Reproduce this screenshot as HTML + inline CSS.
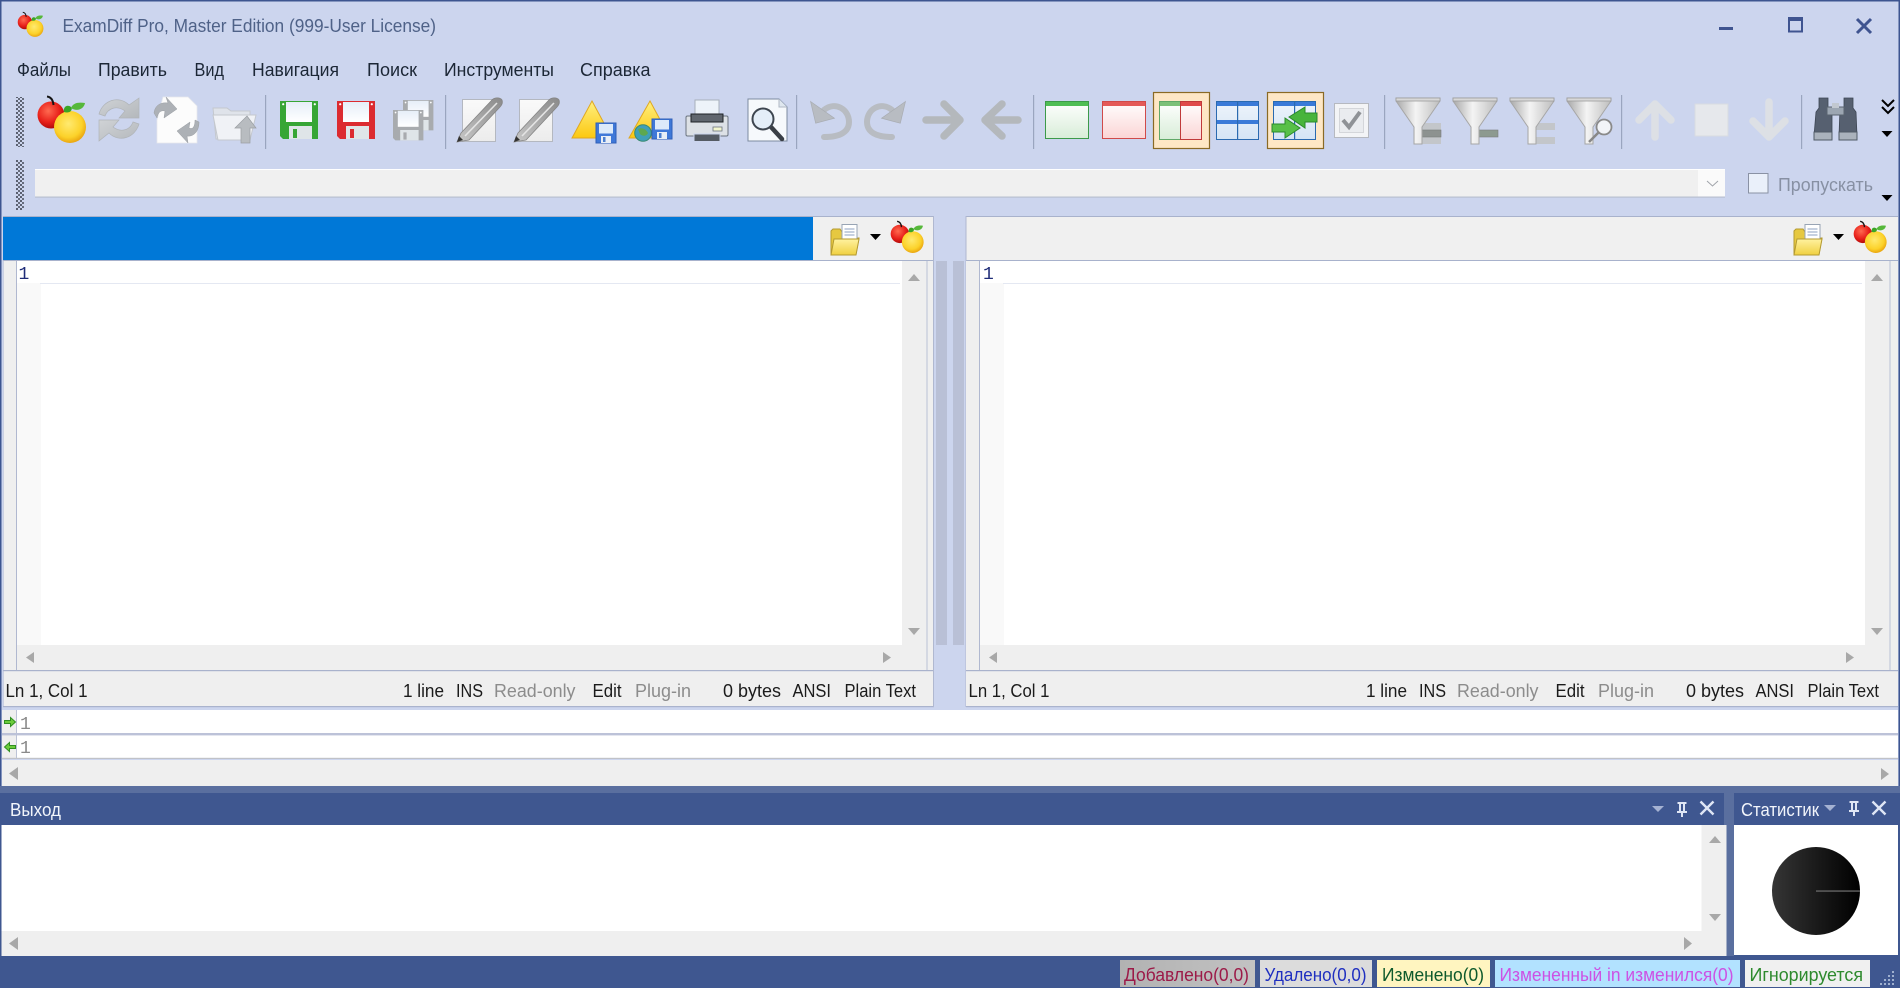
<!DOCTYPE html>
<html lang="ru"><head><meta charset="utf-8"><title>ExamDiff Pro</title>
<style>
html,body{margin:0;padding:0;width:1900px;height:988px;overflow:hidden;background:#ccd5ee}
svg{display:block}
text{font-family:"Liberation Sans","DejaVu Sans",sans-serif}
.m{font-size:18px;fill:#1c2736}
.s{font-size:18px;fill:#1b1b1b}
.g{font-size:18px;fill:#8c8c8c}
.n{font-family:"Liberation Mono","DejaVu Sans Mono",monospace;font-size:18px}
.b{font-size:18px}
</style></head><body>
<svg width="1900" height="988" viewBox="0 0 1900 988" xmlns="http://www.w3.org/2000/svg">
<defs>
<pattern id="grip" width="4" height="4" patternUnits="userSpaceOnUse"><rect width="2" height="2" fill="#5a6070"/><rect x="2" y="2" width="2" height="2" fill="#666c7c"/></pattern>
<radialGradient id="red" cx=".4" cy=".35" r=".7"><stop offset="0" stop-color="#ff6a50"/><stop offset=".6" stop-color="#e8201a"/><stop offset="1" stop-color="#a80808"/></radialGradient>
<radialGradient id="yel" cx=".45" cy=".4" r=".65"><stop offset="0" stop-color="#ffea70"/><stop offset=".65" stop-color="#fcd22a"/><stop offset="1" stop-color="#e59a08"/></radialGradient>
<linearGradient id="fun" x1="0" x2="1" y1="0" y2="0"><stop offset="0" stop-color="#a8a8a8"/><stop offset=".45" stop-color="#f4f4f4"/><stop offset="1" stop-color="#bdbdbd"/></linearGradient>
<linearGradient id="lab" x1="0" x2="0" y1="0" y2="1"><stop offset="0" stop-color="#e6eef8"/><stop offset="1" stop-color="#ffffff"/></linearGradient>
<linearGradient id="wg" x1="0" x2="0" y1="0" y2="1"><stop offset="0" stop-color="#ffffff"/><stop offset="1" stop-color="#d8edd8"/></linearGradient>
<linearGradient id="wr" x1="0" x2="0" y1="0" y2="1"><stop offset="0" stop-color="#ffffff"/><stop offset="1" stop-color="#fbd5d5"/></linearGradient>
<linearGradient id="wb" x1="0" x2="0" y1="0" y2="1"><stop offset="0" stop-color="#eef4fb"/><stop offset="1" stop-color="#d4e4f5"/></linearGradient>
<linearGradient id="tri" x1="0" x2="0" y1="0" y2="1"><stop offset="0" stop-color="#fff080"/><stop offset="1" stop-color="#fcc810"/></linearGradient>
<linearGradient id="fold" x1="0" x2="0" y1="0" y2="1"><stop offset="0" stop-color="#fff2a0"/><stop offset="1" stop-color="#f0d040"/></linearGradient>
<linearGradient id="ball" x1="0" x2="1" y1="0" y2="0"><stop offset="0" stop-color="#353535"/><stop offset="1" stop-color="#000"/></linearGradient>
<linearGradient id="add" x1="0" x2="1" y1="0" y2="0"><stop offset="0" stop-color="#b2b2b2"/><stop offset="1" stop-color="#c2c2c2"/></linearGradient>
<linearGradient id="pen" x1="0" x2="1" y1="1" y2="0"><stop offset="0" stop-color="#c8c8c8"/><stop offset="1" stop-color="#8a8a8a"/></linearGradient>
<linearGradient id="doc" x1="0" x2="0" y1="0" y2="1"><stop offset="0" stop-color="#fafafa"/><stop offset="1" stop-color="#ececec"/></linearGradient>
<linearGradient id="greyb" x1="0" x2="1" y1="0" y2="1"><stop offset="0" stop-color="#d0d3d6"/><stop offset="1" stop-color="#b4b8bc"/></linearGradient>

<g id="apple">
<circle cx="13" cy="19" r="13.5" fill="url(#red)"/>
<path d="M9 0.5C13 1 15 4 15.5 9" fill="none" stroke="#151515" stroke-width="2"/>
<circle cx="32" cy="31" r="16" fill="url(#yel)"/>
<path d="M26 16C25 11 29 8 33 11C35 13 33 18 26 16Z" fill="#3aa526"/>
<path d="M33 12C35 7 40 6 47 7C46 13 39 16 33 12Z" fill="#56b83a"/>
</g>
<g id="floppy">
<path d="M0 0H38V38H3L0 35Z" fill="currentColor"/>
<rect x="6" y="1" width="26" height="20" fill="url(#lab)"/>
<rect x="9" y="25" width="23" height="13" fill="#dfe5e8"/>
<rect x="13" y="28" width="4" height="9" fill="currentColor"/>
<circle cx="3.2" cy="3.2" r="1.1" fill="#fff"/><circle cx="34.8" cy="3.2" r="1.1" fill="#fff"/>
</g>
<g id="bfloppy">
<rect x="0" y="0" width="20" height="20" fill="#3f78d8" stroke="#2f5fb8"/>
<rect x="3" y="1" width="14" height="9.5" fill="#dceafa"/>
<rect x="5" y="13" width="10" height="7" fill="#e8eef6"/>
<rect x="7" y="14" width="2.5" height="5" fill="#4b7fd0"/>
</g>
<g id="pencil">
<rect x="5.5" y="1.5" width="33" height="42" fill="url(#doc)" stroke="#b4b8c0"/>
<path d="M4 35L34 3C37 -1 43 -1 45 2C46 5 45 7 43 9L12 42L0 44Z" fill="url(#pen)" stroke="#858585" stroke-width=".8"/>
<path d="M8 38L40 5" stroke="#e4e4e4" stroke-width="1.6"/>
<path d="M0 44L2 38L6 42Z" fill="#333"/>
</g>
<g id="funnel">
<path d="M0 0H44V3L26 29V46H18V29L0 3Z" fill="url(#fun)" stroke="#a6a6a6" stroke-width="1"/>
<rect x="0" y="0" width="44" height="3" fill="#d8d8d8" stroke="#9c9c9c" stroke-width=".8"/>
</g>
<g id="folder">
<path d="M1 10V30H26L29 14H25V8H12L10 5H3L1 7Z" fill="#e6c840" stroke="#b49a30"/>
<rect x="12" y="0.5" width="15" height="17" fill="#fff" stroke="#98a4b4"/>
<path d="M14.5 5H24.5M14.5 8H24.5M14.5 11H24.5" stroke="#8ea2c0" stroke-width="1"/>
<path d="M1 31L4 15H29L26 31Z" fill="url(#fold)" stroke="#b49a30"/>
</g>
<path id="caret" d="M0 0H11L5.5 6Z" fill="#000"/>
<path id="pin" d="M-4.5 -7H4.5V-5H3V2H5V4H1V8H-1V4H-5V2H-3V-5H-4.5ZM-1 -5V2H1V-5Z" fill="#dfe6f5"/>
<path id="x" d="M-6.5 -6.5L6.5 6.5M6.5 -6.5L-6.5 6.5" stroke="#dfe6f5" stroke-width="2.4" fill="none"/>
<path id="ggreen" d="M0 3H6V0L11 4.5L6 9V6H0Z" fill="#6ccc3c" stroke="#2f8f20" stroke-width="1"/>
</defs>

<!-- base -->
<rect width="1900" height="988" fill="#ccd5ee"/>
<rect width="1900" height="1.5" fill="#3d5590"/>
<rect width="1.5" height="988" fill="#3d5590"/>
<rect x="1898.5" width="1.5" height="988" fill="#3d5590"/>

<!-- title bar -->
<use href="#apple" transform="translate(18,12) scale(.53)"/>
<text x="62.5" y="32" font-size="18" fill="#4f6288" textLength="373.5" lengthAdjust="spacingAndGlyphs">ExamDiff Pro, Master Edition (999-User License)</text>
<rect x="1719" y="27" width="14" height="3" fill="#3f5490"/>
<path d="M1789 18.5H1802V31.5H1789Z" fill="none" stroke="#3f5490" stroke-width="2"/><rect x="1788" y="17" width="15" height="4" fill="#3f5490"/>
<path d="M1857 19L1871 33M1871 19L1857 33" stroke="#3f5490" stroke-width="3"/>

<!-- menu -->
<text class="m" x="17" y="76" textLength="54" lengthAdjust="spacingAndGlyphs">Файлы</text>
<text class="m" x="98" y="76" textLength="69" lengthAdjust="spacingAndGlyphs">Править</text>
<text class="m" x="194.5" y="76" textLength="29.5" lengthAdjust="spacingAndGlyphs">Вид</text>
<text class="m" x="252" y="76" textLength="87" lengthAdjust="spacingAndGlyphs">Навигация</text>
<text class="m" x="367" y="76" textLength="50" lengthAdjust="spacingAndGlyphs">Поиск</text>
<text class="m" x="444" y="76" textLength="110" lengthAdjust="spacingAndGlyphs">Инструменты</text>
<text class="m" x="580" y="76" textLength="70.5" lengthAdjust="spacingAndGlyphs">Справка</text>

<!-- grippers -->
<rect x="16" y="97" width="8" height="50" fill="url(#grip)"/>
<rect x="16" y="160" width="8" height="50" fill="url(#grip)"/>

<!-- separators -->
<g fill="#9aa5bf"><rect x="265" y="95" width="1.2" height="54"/><rect x="445" y="95" width="1.2" height="54"/><rect x="796" y="95" width="1.2" height="54"/><rect x="1033" y="95" width="1.2" height="54"/><rect x="1384" y="95" width="1.2" height="54"/><rect x="1621" y="95" width="1.2" height="54"/><rect x="1801" y="95" width="1.2" height="54"/></g>

<!-- toolbar -->
<use href="#apple" transform="translate(38,96)"/>
<g fill="url(#greyb)" stroke="#b0b4b8" stroke-width=".7">
<path d="M99 114C103 100 119 95 129 105L139 98V118H119L125 111C117 105 108 108 105 116Z"/>
<path d="M139 124C135 138 119 143 109 133L99 141V120H119L113 127C121 133 130 130 133 122Z"/>
</g>
<path d="M163 97H188L197 106V143H157V120Z" fill="#fcfcfc" stroke="#e6e8ec" stroke-width=".8"/>
<g fill="#adb1b6" stroke="#9a9ea3" stroke-width=".5">
<path d="M154 113C155 105 161 102 168 103L166 97L177 109L164 118L165 111C161 110 158 112 157 118Z"/>
<path d="M199 122C199 132 193 137 187 136L188 143L177 131L190 122L189 128C193 130 195 126 195 120Z"/>
</g>
<path d="M213 108H227L231 111H250V139H216Z" fill="#dfe3ea" stroke="#c4c8ce"/>
<path d="M213 115H256L250 140H218Z" fill="#f0f2f6" stroke="#c4c8ce"/>
<path d="M247 116L256 128H250V143H241V128H235Z" fill="#b8bcc0" stroke="#9a9ea2" stroke-width=".7"/>

<use href="#floppy" x="280" y="101" style="color:#37a635"/>
<use href="#floppy" x="337" y="101" style="color:#dc2b30"/>
<use href="#floppy" transform="translate(403,100) scale(.8)" style="color:#a8abae"/>
<use href="#floppy" transform="translate(393,110) scale(.8)" style="color:#a8abae"/>

<use href="#pencil" x="457" y="98"/>
<use href="#pencil" x="514" y="98"/>

<path d="M592 101L612 138H572Z" fill="url(#tri)" stroke="#e0a820"/>
<use href="#bfloppy" x="596" y="123"/>
<path d="M650 101L670 138H629Z" fill="url(#tri)" stroke="#e0a820"/>
<circle cx="643" cy="133" r="8.3" fill="#3f9fb8" stroke="#3a8a70"/><path d="M638 129C642 127 646 129 648 133C646 137 642 136 640 134Z" fill="#5da850"/>
<use href="#bfloppy" x="652" y="119"/>

<rect x="695" y="100" width="24" height="17" fill="#edf3f9" stroke="#a8b0bb"/>
<rect x="686" y="116" width="42" height="20" rx="1.5" fill="#dde1e6" stroke="#6b7480"/>
<rect x="691" y="114" width="32" height="8" fill="#60666e" stroke="#1e2226"/>
<rect x="713" y="127" width="9" height="4" fill="#f2f5ce" stroke="#6b7480" stroke-width=".8"/>
<rect x="694" y="134" width="26" height="7.5" fill="#555b63" stroke="#ccd5ee"/>

<path d="M748 99H779L787 107V141H748Z" fill="#f6f9fc" stroke="#7d8aa0"/>
<path d="M779 99V107H787" fill="#dfe7ef" stroke="#b0b8c4"/>
<path d="M771 127L782 139" stroke="#3a3f46" stroke-width="4.5" stroke-linecap="round"/>
<circle cx="763" cy="119" r="10.5" fill="#e4eef8" stroke="#3e4650" stroke-width="2"/>

<g fill="none" stroke="#b8bcc2" stroke-width="6" stroke-linecap="round">
<path d="M824 110C835 101 849 109 849 122C849 132 840 137 824 137"/>
<path d="M892 110C881 101 867 109 867 122C867 132 876 137 892 137"/>
</g>
<path d="M811 101L834 119 L815 123Z" fill="#b8bcc2" stroke="#a8acb2" stroke-width=".7" transform="rotate(-3 820 110)"/>
<path d="M905 101L882 119L901 123Z" fill="#b8bcc2" stroke="#a8acb2" stroke-width=".7" transform="rotate(3 896 110)"/>

<g fill="none" stroke="#b4b8bc" stroke-width="7.5" stroke-linecap="round" stroke-linejoin="round">
<path d="M926 120H960M944 104L960 120L944 136"/>
<path d="M1018 120H985M1002 104L985 120L1002 136"/>
</g>

<!-- window icons -->
<rect x="1045.5" y="101.5" width="43" height="37" fill="url(#wg)" stroke="#3c9a4a"/><rect x="1046" y="102" width="42" height="4" fill="#4fbe54"/>
<rect x="1102.5" y="101.5" width="43" height="37" fill="url(#wr)" stroke="#d04a4a"/><rect x="1103" y="102" width="42" height="4" fill="#e45a58"/>

<rect x="1153.5" y="92.5" width="56" height="56" fill="#fee7c5" stroke="#8a6a25" stroke-width="1.2"/>
<rect x="1159.5" y="101.5" width="21" height="38" fill="url(#wg)" stroke="#60a868"/><rect x="1160" y="102" width="20" height="4" fill="#7cc078"/>
<rect x="1180.5" y="101.5" width="21" height="38" fill="url(#wr)" stroke="#c03a3a"/><rect x="1181" y="102" width="20" height="4" fill="#e04a4a"/>

<rect x="1216.5" y="101.5" width="42" height="38" fill="url(#wb)" stroke="#2a6ab0"/><rect x="1217" y="102" width="41" height="4" fill="#3a7ad8"/><rect x="1217" y="120" width="41" height="4" fill="#3a7ad8"/><rect x="1237" y="102" width="1.2" height="37" fill="#2a6ab0"/>

<rect x="1267.5" y="92.5" width="56" height="56" fill="#fee7c5" stroke="#8a6a25" stroke-width="1.2"/>
<rect x="1273.5" y="101.5" width="42" height="38" fill="url(#wb)" stroke="#2a6ab0"/><rect x="1274" y="102" width="41" height="4" fill="#3a7ad8"/><rect x="1294" y="102" width="1.2" height="37" fill="#2a6ab0"/>
<path d="M1317 113V122H1305V128L1289 117L1305 107V113Z" fill="#48b43c" stroke="#2a8a2a"/>
<path d="M1272 124V132H1285V138L1300 128L1285 118V124Z" fill="#58c048" stroke="#2a8a2a"/>

<rect x="1334.5" y="103.5" width="34" height="34" fill="#f3f4f6" stroke="#b6b9c0"/><rect x="1339.5" y="108.5" width="24" height="24" fill="#eaecef" stroke="#d4d6da"/>
<path d="M1343 120L1349 127L1360 112" fill="none" stroke="#8f9296" stroke-width="4"/>

<!-- funnels -->
<rect x="1420" y="123" width="21" height="21" fill="#c3c6ca"/><rect x="1420" y="130" width="21" height="7" fill="#8d9290" stroke="#7a7e7c" stroke-width=".6"/>
<use href="#funnel" x="1396" y="98"/>
<rect x="1477" y="130" width="21" height="7" fill="#8d9a90" stroke="#7a7e7c" stroke-width=".6"/>
<use href="#funnel" x="1453" y="98"/>
<rect x="1535" y="123" width="20" height="7" fill="#c3c6ca"/><rect x="1535" y="137" width="20" height="7" fill="#c3c6ca"/>
<use href="#funnel" x="1510" y="98"/>
<use href="#funnel" x="1567" y="98"/>
<path d="M1589 142L1600 131" stroke="#888" stroke-width="2.5"/>
<circle cx="1604" cy="127" r="7.5" fill="#f2f4f8" stroke="#8a8a8a" stroke-width="1.8"/>

<!-- nav arrows -->
<g fill="none" stroke="#dde0e5" stroke-width="7.5" stroke-linecap="round" stroke-linejoin="round">
<path d="M1655 137V105M1639 120L1655 104L1671 120"/>
<path d="M1769 102V137M1753 121L1769 137L1785 121"/>
</g>
<rect x="1695" y="104" width="33" height="32" fill="#e6e8ec" stroke="#d8dbe1"/>

<!-- binoculars -->
<g fill="#566070" stroke="#3d4654" stroke-width=".8">
<path d="M1819 98H1828V108L1832 108V136H1814L1816 112L1819 108Z"/>
<path d="M1844 98H1853V108L1856 112L1857 136H1839L1840 108H1844Z"/>
</g>
<rect x="1827" y="107" width="17" height="8" fill="#9ca6b2" stroke="#5a6470"/><rect x="1832" y="103" width="7" height="5" fill="#c2c8d0"/>
<rect x="1814" y="132" width="18" height="8" fill="#aab2bc" stroke="#505a66"/><rect x="1839" y="132" width="18" height="8" fill="#aab2bc" stroke="#505a66"/>

<path d="M1882 100L1888 106L1894 100M1882 107L1888 113L1894 107" fill="none" stroke="#000" stroke-width="2"/>
<use href="#caret" transform="translate(1881.5,131)"/>
<use href="#caret" transform="translate(1881.5,195)"/>

<!-- search row -->
<rect x="35" y="169" width="1690" height="28" fill="#f0f0f0"/>
<rect x="1698" y="169" width="27" height="28" fill="#fafafa"/>
<rect x="35" y="169" width="1690" height="1" fill="#fff"/><rect x="35" y="196.5" width="1690" height="1.2" fill="#b8bfd0"/>
<path d="M1707 181L1712.5 186L1718 181" fill="none" stroke="#a0a4aa" stroke-width="1"/>
<rect x="1748.5" y="173.5" width="19.5" height="19.5" fill="#eaf0fa" stroke="#8a92a4"/>
<text x="1778" y="191" font-size="18" fill="#8790a3" textLength="95" lengthAdjust="spacingAndGlyphs">Пропускать</text>

<!-- left panel -->
<rect x="3" y="216" width="931" height="45" fill="#f0f0f0"/>
<rect x="3" y="217" width="810" height="43" fill="#0078d7"/>
<rect x="3" y="216" width="931" height="1" fill="#a8b2cc"/>
<rect x="3" y="260" width="931" height="1" fill="#a8b2cc"/>
<use href="#folder" x="830" y="224"/>
<use href="#caret" x="870" y="234"/>
<use href="#apple" transform="translate(891,221) scale(.68)"/>
<rect x="3" y="261" width="931" height="446" fill="#efefef"/>
<rect x="3" y="261" width="1" height="446" fill="#cbd1e2"/>
<rect x="16" y="261" width="1" height="409" fill="#b0b8d0"/>
<rect x="17" y="261" width="885" height="384" fill="#fff"/>
<rect x="17" y="283" width="24" height="362" fill="#f9f9f9"/>
<rect x="40" y="283" width="860" height="1" fill="#e4e8f2"/>
<rect x="926.5" y="261" width="1" height="410" fill="#b8c0d4"/>
<rect x="3" y="670" width="931" height="1.2" fill="#a9b2cc"/>
<rect x="3" y="706" width="931" height="1.2" fill="#aab3cd"/>
<rect x="933" y="216" width="1" height="491" fill="#b0b8d0"/>
<text class="n" x="18.5" y="279" fill="#1f2c78">1</text>
<path d="M908 281L914 274L920 281Z" fill="#a8a8a8"/>
<path d="M908 628L914 635L920 628Z" fill="#a8a8a8"/>
<path d="M34 652L26 657.5L34 663Z" fill="#a8a8a8"/>
<path d="M883 652L891 657.5L883 663Z" fill="#a8a8a8"/>

<text class="s" x="5.5" y="697" textLength="82" lengthAdjust="spacingAndGlyphs">Ln 1, Col 1</text>
<text class="s" x="403" y="697" textLength="41" lengthAdjust="spacingAndGlyphs">1 line</text>
<text class="s" x="456" y="697" textLength="27" lengthAdjust="spacingAndGlyphs">INS</text>
<text class="g" x="494" y="697" textLength="81.5" lengthAdjust="spacingAndGlyphs">Read-only</text>
<text class="s" x="592.5" y="697" textLength="29" lengthAdjust="spacingAndGlyphs">Edit</text>
<text class="g" x="635" y="697" textLength="56" lengthAdjust="spacingAndGlyphs">Plug-in</text>
<text class="s" x="723" y="697" textLength="58" lengthAdjust="spacingAndGlyphs">0 bytes</text>
<text class="s" x="792.5" y="697" textLength="38.5" lengthAdjust="spacingAndGlyphs">ANSI</text>
<text class="s" x="844.5" y="697" textLength="71.5" lengthAdjust="spacingAndGlyphs">Plain Text</text>

<!-- splitter -->
<rect x="936" y="261" width="11" height="384" fill="#b9c0d6"/>
<rect x="953" y="261" width="11" height="384" fill="#b9c0d6"/>

<!-- right panel -->
<rect x="966" y="216" width="932" height="45" fill="#f0f0f0"/>
<rect x="966" y="216" width="932" height="1" fill="#a8b2cc"/>
<rect x="966" y="260" width="932" height="1" fill="#a8b2cc"/>
<rect x="965.5" y="216" width="1" height="491" fill="#b0b8d0"/>
<use href="#folder" x="1793" y="224"/>
<use href="#caret" x="1833" y="234"/>
<use href="#apple" transform="translate(1854,221) scale(.68)"/>
<rect x="966" y="261" width="932" height="446" fill="#efefef"/>
<rect x="979" y="261" width="1" height="409" fill="#b0b8d0"/>
<rect x="980" y="261" width="885" height="384" fill="#fff"/>
<rect x="980" y="283" width="24" height="362" fill="#f9f9f9"/>
<rect x="1003" y="283" width="859" height="1" fill="#e4e8f2"/>
<rect x="1889.5" y="261" width="1" height="410" fill="#b8c0d4"/>
<rect x="966" y="670" width="932" height="1.2" fill="#a9b2cc"/>
<rect x="966" y="706" width="932" height="1.2" fill="#aab3cd"/>
<text class="n" x="983" y="279" fill="#1f2c78">1</text>
<path d="M1871 281L1877 274L1883 281Z" fill="#a8a8a8"/>
<path d="M1871 628L1877 635L1883 628Z" fill="#a8a8a8"/>
<path d="M997 652L989 657.5L997 663Z" fill="#a8a8a8"/>
<path d="M1846 652L1854 657.5L1846 663Z" fill="#a8a8a8"/>

<text class="s" x="968.5" y="697" textLength="81" lengthAdjust="spacingAndGlyphs">Ln 1, Col 1</text>
<text class="s" x="1366" y="697" textLength="41" lengthAdjust="spacingAndGlyphs">1 line</text>
<text class="s" x="1419" y="697" textLength="27" lengthAdjust="spacingAndGlyphs">INS</text>
<text class="g" x="1457" y="697" textLength="81.5" lengthAdjust="spacingAndGlyphs">Read-only</text>
<text class="s" x="1555.5" y="697" textLength="29" lengthAdjust="spacingAndGlyphs">Edit</text>
<text class="g" x="1598" y="697" textLength="56" lengthAdjust="spacingAndGlyphs">Plug-in</text>
<text class="s" x="1686" y="697" textLength="58" lengthAdjust="spacingAndGlyphs">0 bytes</text>
<text class="s" x="1755.5" y="697" textLength="38.5" lengthAdjust="spacingAndGlyphs">ANSI</text>
<text class="s" x="1807.5" y="697" textLength="71.5" lengthAdjust="spacingAndGlyphs">Plain Text</text>

<!-- compare lines -->
<rect x="2" y="710" width="1896" height="48" fill="#fff"/>
<rect x="2" y="710" width="14" height="48" fill="#efefef"/>
<rect x="16" y="710" width="1" height="48" fill="#bcc3d6"/>
<rect x="2" y="733" width="1896" height="2.4" fill="#bcc2d8"/>
<rect x="2" y="757.8" width="1896" height="1.2" fill="#c0c2c8"/>
<use href="#ggreen" x="4.5" y="717.5"/>
<use href="#ggreen" transform="translate(15.5,742.5) scale(-1,1)"/>
<text class="n" x="20" y="729" fill="#8a8a8a">1</text>
<text class="n" x="20" y="753" fill="#8a8a8a">1</text>
<rect x="2" y="760" width="1896" height="26" fill="#efefef"/>
<path d="M18 767L9 773.5L18 780Z" fill="#a8a8a8"/>
<path d="M1881 768L1889 774L1881 780Z" fill="#a8a8a8"/>

<!-- dock -->
<rect x="0" y="786" width="1900" height="202" fill="#3f5790"/>
<rect x="0" y="786" width="1900" height="7" fill="#5a6f9f"/>
<rect x="1724" y="786" width="10" height="170" fill="#5a6f9f"/>
<rect x="3" y="793" width="1721" height="32" fill="#3f5790"/>
<rect x="1734" y="793" width="164" height="32" fill="#3f5790"/>
<text x="10" y="816" font-size="18" fill="#f2f5fb" textLength="51" lengthAdjust="spacingAndGlyphs">Выход</text>
<path d="M1652 806H1664L1658 812Z" fill="#a5b2d2"/>
<use href="#pin" x="1682" y="809"/>
<use href="#x" x="1707" y="808"/>
<text x="1741" y="816" font-size="18" fill="#f2f5fb" textLength="78" lengthAdjust="spacingAndGlyphs">Статистик</text>
<path d="M1824 805H1836L1830 811Z" fill="#a5b2d2"/>
<use href="#pin" x="1854" y="808"/>
<use href="#x" x="1879" y="808"/>

<rect x="1.5" y="825" width="1725" height="131" fill="#efefef"/>
<rect x="1.5" y="825" width="1700" height="106" fill="#fff"/>
<path d="M1709 843L1715 836L1721 843Z" fill="#a8a8a8"/>
<path d="M1709 914L1715 921L1721 914Z" fill="#a8a8a8"/>
<path d="M18 937L9 943.5L18 950Z" fill="#a8a8a8"/>
<path d="M1684 937L1692 943.5L1684 950Z" fill="#a8a8a8"/>

<rect x="1734" y="825" width="164" height="130" fill="#fff"/>
<circle cx="1816" cy="891" r="44" fill="url(#ball)"/>
<rect x="1816" y="890.4" width="44" height="1.3" fill="#6a6a6a"/>

<!-- status -->
<rect x="1120" y="960" width="135" height="27" fill="url(#add)"/>
<text class="b" x="1124" y="981" fill="#9c1a48" textLength="125" lengthAdjust="spacingAndGlyphs">Добавлено(0,0)</text>
<rect x="1260" y="960" width="112" height="27" fill="#dcdcdc"/>
<text class="b" x="1264.5" y="981" fill="#1f2fc0" textLength="102" lengthAdjust="spacingAndGlyphs">Удалено(0,0)</text>
<rect x="1377" y="960" width="113" height="27" fill="#fff5c0"/>
<text class="b" x="1382" y="981" fill="#0e5a2c" textLength="102" lengthAdjust="spacingAndGlyphs">Изменено(0)</text>
<rect x="1495" y="960" width="245" height="27" fill="#b2e2ff"/>
<text class="b" x="1499.5" y="981" fill="#cc52e4" textLength="234" lengthAdjust="spacingAndGlyphs">Измененный in изменился(0)</text>
<rect x="1745" y="960" width="125" height="27" fill="#f0f0f0"/>
<text class="b" x="1749.5" y="981" fill="#2e8a2e" textLength="113.5" lengthAdjust="spacingAndGlyphs">Игнорируется</text>
<g fill="#9fb0cf"><rect x="1892" y="971" width="2" height="2"/><rect x="1888" y="975" width="2" height="2"/><rect x="1892" y="975" width="2" height="2"/><rect x="1884" y="979" width="2" height="2"/><rect x="1888" y="979" width="2" height="2"/><rect x="1892" y="979" width="2" height="2"/><rect x="1880" y="983" width="2" height="2"/><rect x="1884" y="983" width="2" height="2"/><rect x="1888" y="983" width="2" height="2"/><rect x="1892" y="983" width="2" height="2"/></g>
</svg>
</body></html>
